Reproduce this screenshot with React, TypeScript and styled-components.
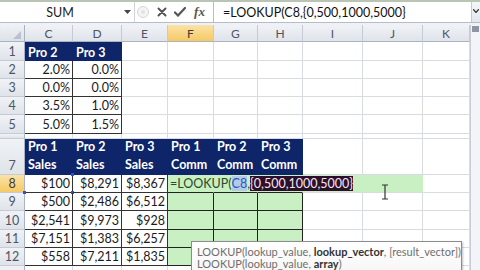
import React from 'react';
import styled, { createGlobalStyle, css } from 'styled-components';

const GlobalStyle = createGlobalStyle`
  html, body { margin: 0; padding: 0; }
  body {
    width: 480px;
    height: 270px;
    overflow: hidden;
    background: #fff;
    font-family: Lato, "Liberation Sans", sans-serif;
  }
`;

const NAVY = '#0f2569';
const GRID = '#d9dbe2';
const INK = '#333';
const GREEN = '#c8f0c3';

const Window = styled.div`
  position: relative;
  width: 480px;
  height: 270px;
  display: flex;
  flex-direction: column;
  overflow: hidden;
  border-top: 2px solid #b9c4b4;
  box-sizing: border-box;
`;

const FormulaBar = styled.div`
  height: 20px;
  display: flex;
  background: #fff;
  border-bottom: 1px solid #b5bdc9;
  flex-shrink: 0;
`;

const NameBox = styled.div`
  width: 135px;
  display: flex;
  align-items: center;
  border-right: 1px solid #cfd5dd;
  box-sizing: border-box;
`;

const NameText = styled.div`
  flex: 1;
  text-align: center;
  font-size: 12.5px;
  color: #222;
`;

const DropArrow = styled.div`
  width: 14px;
  display: flex;
  justify-content: center;
`;

const IconZone = styled.div`
  width: 78px;
  display: flex;
  align-items: center;
  box-sizing: border-box;
`;

const IconSlot = styled.div<{ $w: number }>`
  width: ${p => p.$w}px;
  display: flex;
  justify-content: center;
  align-items: center;
`;

const FxText = styled.span`
  font-family: "Liberation Serif", serif;
  font-style: italic;
  font-weight: bold;
  font-size: 13px;
  color: #555;
`;

const FormulaInput = styled.div`
  flex: 1;
  display: flex;
  align-items: center;
  padding-left: 9px;
  border-left: 1px solid #b5bdc9;
  font-size: 12.5px;
  color: #111;
  white-space: nowrap;
`;

const ExpandBtn = styled.div`
  width: 9px;
  border-left: 1px solid #c4cad3;
  background: linear-gradient(#f4f6f9, #e3e7ed);
  display: flex;
  justify-content: center;
  padding-top: 7px;
  box-sizing: border-box;
`;

const Spacer = styled.div`
  height: 2px;
  background: #eef1f5;
  flex-shrink: 0;
`;

const Main = styled.div`
  flex: 1;
  display: flex;
  min-height: 0;
`;

const Sheet = styled.div`
  width: 470px;
  display: grid;
  grid-template-columns: 25px 48px 49px 46px 46px 44px 45px 60px 60px 47px;
  grid-template-rows: 17px 19px 18px 18px 18px 19px 5px 36px 18px 18px 19px 18px 18px 20px;
  overflow: hidden;
`;

const Corner = styled.div`
  background: linear-gradient(#eef1f5, #dde2e9);
  border-right: 1px solid #a9b3c1;
  border-bottom: 1px solid #a9b3c1;
  display: flex;
  align-items: flex-end;
  justify-content: flex-end;
  padding: 0 3px 2px 0;
  box-sizing: border-box;
`;

const headerBg = (active: boolean) =>
  active
    ? css`background: linear-gradient(#fbe3a6, #f5c965); color: #3c3c3c;`
    : css`background: linear-gradient(#f0f2f6, #dfe4ea); color: #4d5566;`;

const ColHead = styled.div<{ $active?: boolean }>`
  ${p => headerBg(!!p.$active)}
  border-right: 1px solid #c5cbd4;
  border-bottom: 1px solid #a9b3c1;
  box-sizing: border-box;
  display: flex;
  align-items: center;
  justify-content: center;
  font-size: 12px;
`;

const RowHead = styled.div<{ $active?: boolean }>`
  ${p => headerBg(!!p.$active)}
  border-right: 1px solid #a9b3c1;
  border-bottom: 1px solid #c5cbd4;
  box-sizing: border-box;
  display: flex;
  align-items: flex-end;
  justify-content: center;
  font-size: 12.5px;
  line-height: 17px;
  overflow: hidden;
`;

type Tone = 'plain' | 'head' | 'box' | 'fill' | 'edit' | 'editDark';

const toneStyle: Record<Tone, ReturnType<typeof css>> = {
  plain: css`border-right: 1px solid ${GRID}; border-bottom: 1px solid ${GRID};`,
  head: css`
    background: ${NAVY};
    color: #fff;
    font-weight: bold;
    border-right: 1px solid ${NAVY};
    border-bottom: 1px solid ${NAVY};
    justify-content: flex-start;
    align-items: flex-end;
    padding-left: 3px;
  `,
  box: css`border-right: 1px solid ${INK}; border-bottom: 1px solid ${INK};`,
  fill: css`background: ${GREEN}; border-right: 1px solid #222; border-bottom: 1px solid #222;`,
  edit: css`background: ${GREEN}; border-right: 1px solid ${GREEN}; border-bottom: 1px solid ${GRID};`,
  editDark: css`background: ${GREEN}; border-right: 1px solid ${GREEN}; border-bottom: 1px solid #222;`,
};

const Cell = styled.div<{ $tone: Tone }>`
  box-sizing: border-box;
  display: flex;
  align-items: center;
  justify-content: flex-end;
  padding-right: 2px;
  font-size: 12.5px;
  color: #1a1a1a;
  white-space: nowrap;
  position: relative;
  ${p => toneStyle[p.$tone]}
`;

const HeadText = styled.div`
  line-height: 18px;
`;

const EditCell = styled(Cell)`
  justify-content: flex-start;
  padding-left: 2px;
  overflow: visible;
  z-index: 1;
  color: #2b4a2b;
`;

const RefText = styled.span`
  color: #2d58b8;
  background: #b3cbe6;
`;

const SelText = styled.span`
  color: #f3e6f2;
  background: #2c0f2b;
`;

const RefDot = styled.div<{ $x: 'left' | 'right'; $y: 'top' | 'bottom' }>`
  position: absolute;
  width: 3px;
  height: 3px;
  background: #2f4fd0;
  ${p => (p.$x === 'left' ? 'left: -2px;' : 'right: -2px;')}
  ${p => (p.$y === 'top' ? 'top: -2px;' : 'bottom: -2px;')}
`;

const VScroll = styled.div`
  width: 10px;
  background: #f3f4f7;
  border-left: 1px solid #c9ced6;
  box-sizing: border-box;
`;

const SplitBox = styled.div`
  height: 6px;
  background: #8d96a5;
  margin: 1px 1px 0 1px;
`;

const Cursor = styled.svg`
  position: absolute;
  left: 380px;
  top: 182px;
`;

const Tooltip = styled.div`
  position: absolute;
  left: 191px;
  top: 239px;
  width: 271px;
  height: 40px;
  box-sizing: border-box;
  padding: 4px 5px;
  background: linear-gradient(#ffffff, #f4f4f4);
  border: 1px solid #8c8c8c;
  box-shadow: 1px 1px 2px rgba(0, 0, 0, 0.25);
  font-size: 11px;
  line-height: 12px;
  color: #6e6e6e;
  white-space: nowrap;
`;

const Arg = styled.b`
  color: #333;
`;

type CellDef = { tone: Tone; text?: string; lines?: [string, string] };

const P: CellDef = { tone: 'plain' };
const empty = (n: number): CellDef[] => Array.from({ length: n }, () => P);
const box = (t: string): CellDef => ({ tone: 'box', text: t });
const head2 = (a: string, b: string): CellDef => ({ tone: 'head', lines: [a, b] });
const fill: CellDef = { tone: 'fill' };

const pct: [string, string][] = [
  ['2.0%', '0.0%'],
  ['0.0%', '0.0%'],
  ['3.5%', '1.0%'],
  ['5.0%', '1.5%'],
];

const sales: [string, string, string][] = [
  ['$500', '$2,486', '$6,512'],
  ['$2,541', '$9,973', '$928'],
  ['$7,151', '$1,383', '$6,257'],
  ['$558', '$7,211', '$1,835'],
];

const columns = ['C', 'D', 'E', 'F', 'G', 'H', 'I', 'J', 'K'];

function Grip() {
  return (
    <svg width="14" height="14" viewBox="0 0 14 14">
      <circle cx="7" cy="7" r="5.5" fill="#f4f4f4" stroke="#d6d6d6" />
      <circle cx="7" cy="7" r="2" fill="#e2e2e2" />
    </svg>
  );
}

export default function App() {
  const rows: { key: string; n: string; cells: CellDef[] | 'edit' }[] = [
    { key: 'r1', n: '1', cells: [{ tone: 'head', text: 'Pro 2' }, { tone: 'head', text: 'Pro 3' }, ...empty(7)] },
    ...pct.map((r, i) => ({ key: `r${i + 2}`, n: String(i + 2), cells: [box(r[0]), box(r[1]), ...empty(7)] })),
    { key: 'r6', n: '', cells: empty(9) },
    {
      key: 'r7',
      n: '7',
      cells: [
        head2('Pro 1', 'Sales'),
        head2('Pro 2', 'Sales'),
        head2('Pro 3', 'Sales'),
        head2('Pro 1', 'Comm'),
        head2('Pro 2', 'Comm'),
        head2('Pro 3', 'Comm'),
        ...empty(3),
      ],
    },
    { key: 'r8', n: '8', cells: 'edit' },
    ...sales.map((r, i) => ({
      key: `r${i + 9}`,
      n: String(i + 9),
      cells: [box(r[0]), box(r[1]), box(r[2]), fill, fill, fill, ...empty(3)],
    })),
    // row 13 only peeks in at the bottom edge
    { key: 'r13', n: '', cells: empty(9) },
  ];

  return (
    <>
      <GlobalStyle />
      <Window>
        <FormulaBar>
          <NameBox>
            <NameText>SUM</NameText>
            <DropArrow>
              <svg width="7" height="4" viewBox="0 0 7 4">
                <path d="M0 0h7L3.5 4z" fill="#444" />
              </svg>
            </DropArrow>
          </NameBox>
          <IconZone>
            <IconSlot $w={16}>
              <Grip />
            </IconSlot>
            <IconSlot $w={21}>
              <svg width="10" height="10" viewBox="0 0 10 10">
                <path d="M1.5 1.5l7 7M8.5 1.5l-7 7" stroke="#555" strokeWidth="2" strokeLinecap="round" />
              </svg>
            </IconSlot>
            <IconSlot $w={16}>
              <svg width="12" height="10" viewBox="0 0 12 10">
                <path d="M1 5.5l3 3L11 1" stroke="#555" strokeWidth="2.2" fill="none" strokeLinecap="round" />
              </svg>
            </IconSlot>
            <IconSlot $w={23}>
              <FxText>fx</FxText>
            </IconSlot>
          </IconZone>
          <FormulaInput>=LOOKUP(C8,{'{'}0,500,1000,5000{'}'}</FormulaInput>
          <ExpandBtn>
            <svg width="6" height="4" viewBox="0 0 6 4">
              <path d="M0 0l3 3.5L6 0" stroke="#444" strokeWidth="1.4" fill="none" />
            </svg>
          </ExpandBtn>
        </FormulaBar>
        <Spacer />
        <Main>
          <Sheet>
            <Corner>
              <svg width="8" height="8" viewBox="0 0 8 8">
                <path d="M8 0v8H0z" fill="#b9c1cc" />
              </svg>
            </Corner>
            {columns.map(c => (
              <ColHead key={c} $active={c === 'F'}>
                {c}
              </ColHead>
            ))}
            {rows.map(row => (
              <React.Fragment key={row.key}>
                <RowHead $active={row.n === '8'}>{row.n}</RowHead>
                {row.cells === 'edit' ? (
                  <>
                    <Cell $tone="box">
                      $100
                      <RefDot $x="right" $y="top" />
                      <RefDot $x="right" $y="bottom" />
                      <RefDot $x="left" $y="bottom" />
                    </Cell>
                    <Cell $tone="box">$8,291</Cell>
                    <Cell $tone="box">$8,367</Cell>
                    <EditCell $tone="editDark">
                      =LOOKUP(<RefText>C8</RefText>,<SelText>{'{'}0,500,1000,5000{'}'}</SelText>
                    </EditCell>
                    <Cell $tone="editDark" />
                    <Cell $tone="editDark" />
                    <Cell $tone="edit" />
                    <Cell $tone="edit" />
                    <Cell $tone="plain" />
                  </>
                ) : (
                  row.cells.map((cell, i) => (
                    <Cell key={i} $tone={cell.tone}>
                      {cell.lines ? (
                        <HeadText>
                          {cell.lines[0]}
                          <br />
                          {cell.lines[1]}
                        </HeadText>
                      ) : (
                        cell.text
                      )}
                    </Cell>
                  ))
                )}
              </React.Fragment>
            ))}
          </Sheet>
          <VScroll>
            <SplitBox />
          </VScroll>
        </Main>
        <Cursor width="10" height="16" viewBox="0 0 10 16">
          <path d="M2 1h6M5 1v14M2 15h6" stroke="#333" strokeWidth="1.2" fill="none" />
        </Cursor>
        <Tooltip>
          LOOKUP(lookup_value, <Arg>lookup_vector</Arg>, [result_vector])
          <br />
          LOOKUP(lookup_value, <Arg>array</Arg>)
        </Tooltip>
      </Window>
    </>
  );
}
